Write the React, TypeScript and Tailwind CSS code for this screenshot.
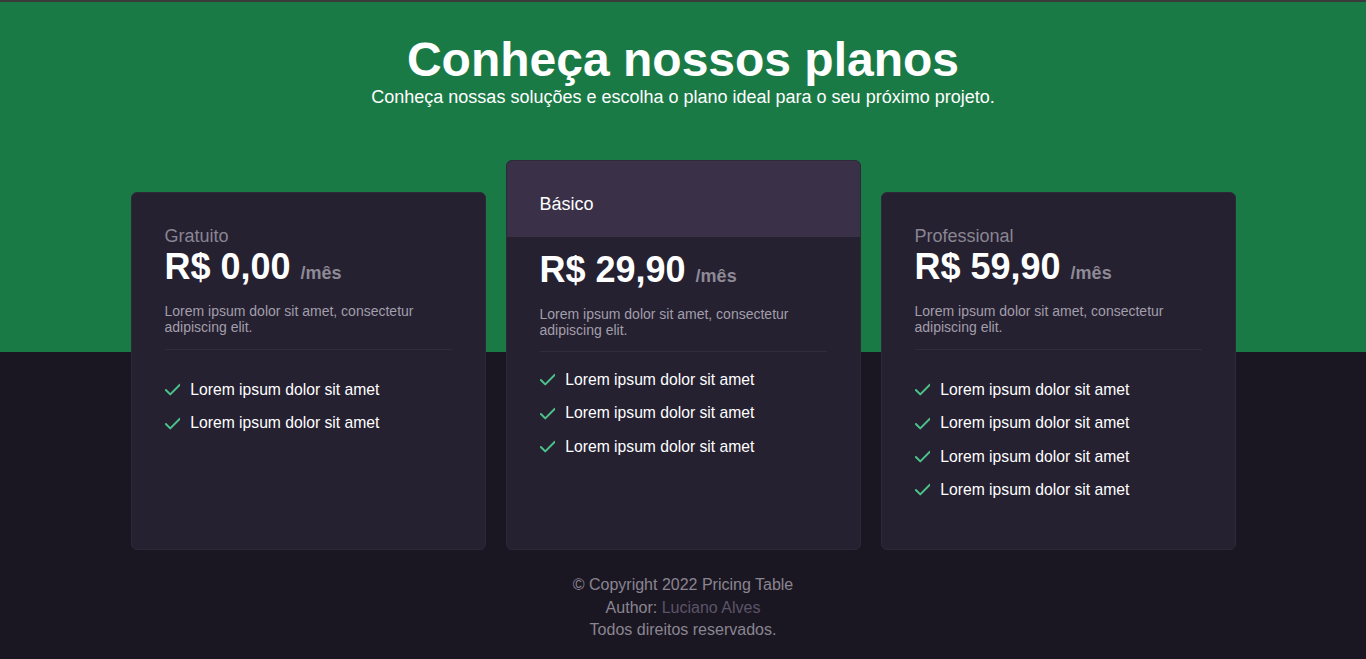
import React from "react";

function CheckIcon() {
  return (
    <svg
      width="15.75"
      height="13.1"
      viewBox="3 4 18 15"
      fill="none"
      stroke="#4cc38a"
      strokeWidth="2.3"
      strokeLinecap="round"
      strokeLinejoin="round"
      className="shrink-0 mr-[10px]"
    >
      <path d="M20 6 9 17l-5-5" />
    </svg>
  );
}

function Features({ count, mt }: { count: number; mt: string }) {
  return (
    <ul className={`flex flex-col gap-[9.33px] ${mt}`}>
      {Array.from({ length: count }).map((_, i) => (
        <li key={i} className="flex items-center text-[15.7px] leading-[24px] text-white">
          <CheckIcon />
          Lorem ipsum dolor sit amet
        </li>
      ))}
    </ul>
  );
}

function Price({ value }: { value: string }) {
  return (
    <div className="flex items-baseline">
      <span className="text-[36px] leading-[40px] font-bold text-white">{value}</span>
      <span className="ml-[10px] text-[18px] font-bold text-[#8e8a96]">/mês</span>
    </div>
  );
}

function SideCard({ name, price, features }: { name: string; price: string; features: number }) {
  return (
    <div className="w-[355px] h-[358px] rounded-[6px] border border-[#2d2939] bg-[#252131] px-[33px] pt-[32px]">
      <div className="text-[18px] leading-[22px] text-[#8a8591]">{name}</div>
      <Price value={price} />
      <p className="mt-[16px] text-[14px] leading-[16px] text-[#a29eaa]">
        Lorem ipsum dolor sit amet, consectetur adipiscing elit.
      </p>
      <div className="mt-[14px] border-t border-[#302b3d]" />
      <Features count={features} mt="mt-[28px]" />
    </div>
  );
}

function MiddleCard() {
  return (
    <div className="w-[355px] h-[390px] rounded-[6px] border border-[#2d2939] bg-[#252131] overflow-hidden">
      <div className="bg-[#3a3149] px-[33px] pt-[32px] pb-[22px] text-[18px] leading-[22px] text-white">
        Básico
      </div>
      <div className="px-[33px]">
        <div className="mt-[13px]">
          <Price value="R$ 29,90" />
        </div>
        <p className="mt-[16px] text-[14px] leading-[16px] text-[#a29eaa]">
          Lorem ipsum dolor sit amet, consectetur adipiscing elit.
        </p>
        <div className="mt-[13px] border-t border-[#302b3d]" />
        <Features count={3} mt="mt-[16px]" />
      </div>
    </div>
  );
}

export default function App() {
  return (
    <div
      className="min-h-screen w-full bg-[linear-gradient(to_bottom,#1a7a46_352px,#1b1722_352px)] font-['Liberation_Sans',Arial,sans-serif]"
    >
      <div className="h-[2px] bg-[#3a3a3a]" />
      <header className="flex flex-col items-center pt-[34px] text-white">
        <h1 className="text-[48px] leading-[48px] font-bold">Conheça nossos planos</h1>
        <p className="mt-[2px] text-[18px] leading-[22px]">
          Conheça nossas soluções e escolha o plano ideal para o seu próximo projeto.
        </p>
      </header>
      <main className="mx-auto mt-[52px] flex w-[1105px] items-end gap-[20px]">
        <SideCard name="Gratuito" price="R$ 0,00" features={2} />
        <MiddleCard />
        <SideCard name="Professional" price="R$ 59,90" features={4} />
      </main>
      <footer className="mt-[24px] flex flex-col items-center text-[16px] leading-[22.5px] text-[#8a8591]">
        <span>© Copyright 2022 Pricing Table</span>
        <span>
          Author: <span className="text-[#5b5468]">Luciano Alves</span>
        </span>
        <span>Todos direitos reservados.</span>
      </footer>
    </div>
  );
}
